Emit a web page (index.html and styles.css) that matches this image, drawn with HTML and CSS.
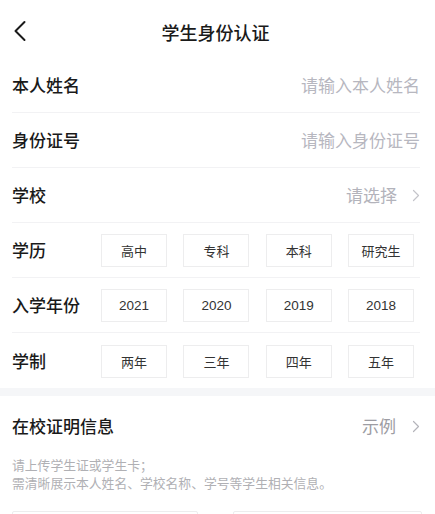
FILE: index.html
```html
<!DOCTYPE html>
<html lang="zh-CN">
<head>
<meta charset="utf-8">
<title>学生身份认证</title>
<link rel="stylesheet" href="styles.css">
</head>
<body>
<div class="page">
  <header class="nav">
    <span class="back">
      <svg width="14" height="22" viewBox="0 0 14 22"><path d="M11.5 2 L2.5 11 L11.5 20" fill="none" stroke="#1a1a1a" stroke-width="2" stroke-linecap="round" stroke-linejoin="round"/></svg>
    </span>
    <h1 class="title">学生身份认证</h1>
    <span></span>
  </header>

  <section class="form">
    <div class="row">
      <span class="label">本人姓名</span>
      <span class="placeholder">请输入本人姓名</span>
    </div>
    <div class="row">
      <span class="label">身份证号</span>
      <span class="placeholder">请输入身份证号</span>
    </div>
    <div class="row">
      <span class="label">学校</span>
      <span class="select">请选择
        <svg class="chev" width="8" height="13" viewBox="0 0 8 13"><path d="M1.5 1.5 L6.5 6.5 L1.5 11.5" fill="none" stroke="#c4c4ca" stroke-width="1.2" stroke-linecap="round" stroke-linejoin="round"/></svg>
      </span>
    </div>
    <div class="row">
      <span class="label">学历</span>
      <div class="opts">
        <span class="opt">高中</span><span class="opt">专科</span><span class="opt">本科</span><span class="opt">研究生</span>
      </div>
    </div>
    <div class="row">
      <span class="label">入学年份</span>
      <div class="opts">
        <span class="opt num">2021</span><span class="opt num">2020</span><span class="opt num">2019</span><span class="opt num">2018</span>
      </div>
    </div>
    <div class="row last">
      <span class="label">学制</span>
      <div class="opts">
        <span class="opt">两年</span><span class="opt">三年</span><span class="opt">四年</span><span class="opt">五年</span>
      </div>
    </div>
  </section>

  <div class="band"></div>

  <section class="proof">
    <div class="proof-head">
      <span class="proof-title">在校证明信息</span>
      <span class="example">示例
        <svg class="chev" width="8" height="13" viewBox="0 0 8 13"><path d="M1.5 1.5 L6.5 6.5 L1.5 11.5" fill="none" stroke="#b4b4ba" stroke-width="1.2" stroke-linecap="round" stroke-linejoin="round"/></svg>
      </span>
    </div>
    <p class="desc">请上传学生证或学生卡；<br>需清晰展示本人姓名、学校名称、学号等学生相关信息。</p>
    <div class="uploads">
      <div class="upload"></div>
      <div class="upload"></div>
    </div>
  </section>
</div>
</body>
</html>
```

FILE: styles.css
```css
* { box-sizing: border-box; }
html, body { margin: 0; padding: 0; background: #fff; }
body {
  font-family: "Noto Sans CJK SC", "Noto Sans", sans-serif;
  color: #1a1a1a;
  width: 435px;
  overflow: hidden;
}
.page { width: 435px; }

.nav {
  height: 58px;
  display: grid;
  grid-template-columns: 1fr auto 1fr;
  align-items: center;
  padding: 0 12px;
}
.back { display: flex; align-items: center; padding-left: 1px; padding-top: 3px; }
.title {
  margin: 0;
  font-size: 18px;
  font-weight: 500;
  line-height: 24px;
  padding-top: 6px;
  padding-right: 4px;
}

.form { padding: 0 15px 0 12px; }
.row {
  height: 55px;
  display: flex;
  align-items: center;
  justify-content: space-between;
  border-bottom: 1px solid #f2f2f4;
}
.row.last { border-bottom: none; }
.label {
  font-size: 17px;
  font-weight: 500;
  line-height: 24px;
  width: 89px;
  flex: none;
}
.placeholder {
  font-size: 17px;
  color: #b7b7bf;
  line-height: 24px;
}
.select {
  font-size: 17px;
  color: #b3b3bb;
  line-height: 24px;
  display: flex;
  align-items: center;
  gap: 15px;
}
.chev { display: block; }

.opts {
  display: flex;
  gap: 16.3px;
  margin-right: 6px;
  padding-top: 1px;
}
.opt {
  width: 66px;
  height: 33px;
  border: 1px solid #ededee;
  display: flex;
  align-items: center;
  justify-content: center;
  font-size: 13px;
  color: #333;
}
.opt.num {
  font-family: "Liberation Sans", "Noto Sans CJK SC", sans-serif;
  font-size: 13.5px;
}

.band { height: 8px; background: #f5f6f8; }

.proof { padding: 0 13px 0 12px; }
.proof-head {
  height: 60px;
  display: flex;
  align-items: center;
  justify-content: space-between;
  padding-right: 2px;
}
.proof-title {
  font-size: 17px;
  font-weight: 500;
  line-height: 24px;
}
.example {
  font-size: 17px;
  color: #9d9da3;
  display: flex;
  align-items: center;
  gap: 16px;
  line-height: 24px;
}
.desc {
  margin: 0;
  font-size: 12.8px;
  line-height: 18px;
  color: #b0b0b4;
}
.uploads {
  margin-top: 19px;
  display: grid;
  grid-template-columns: 186px 189px;
  justify-content: space-between;
}
.upload {
  height: 120px;
  border: 1px solid #ededee;
  border-radius: 2px;
}
```
